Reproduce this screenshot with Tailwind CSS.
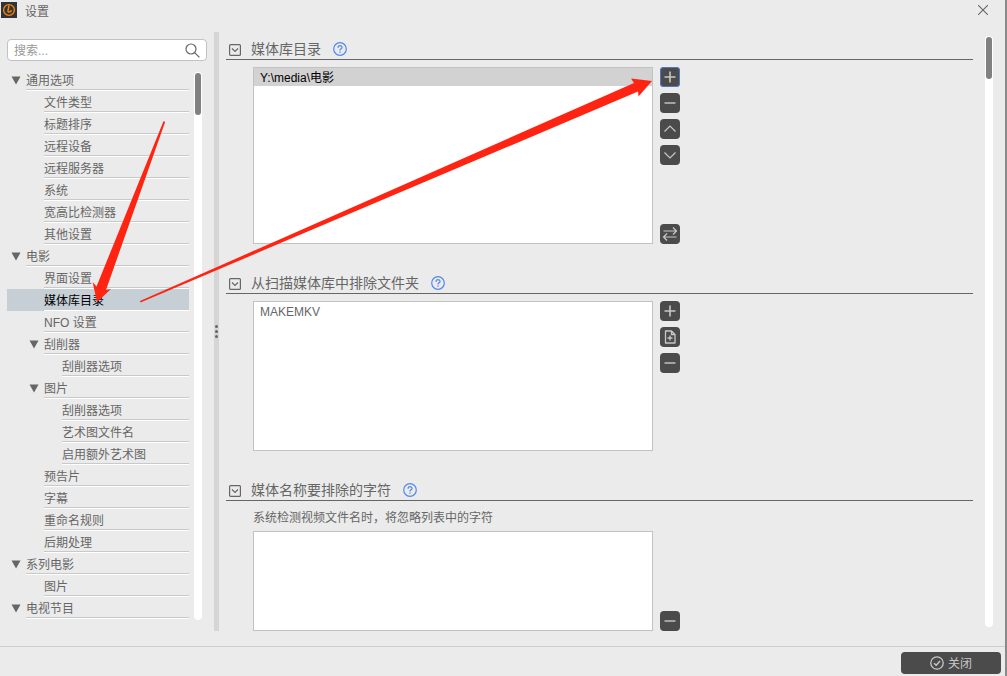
<!DOCTYPE html>
<html lang="zh-CN">
<head>
<meta charset="utf-8">
<title>设置</title>
<meta name="viewport" content="width=device-width, initial-scale=1">
<script src="https://cdn.jsdelivr.net/npm/@tailwindcss/browser@4"></script>
</head>
<body class="relative flex h-screen flex-col overflow-hidden border-r-2 border-[#8a8a8a] bg-[#ebebeb] font-['Liberation_Sans','Noto_Sans_CJK_SC',sans-serif] text-xs text-[#666666]">

<svg class="hidden" aria-hidden="true">
  <symbol id="plus" viewBox="0 0 20 20"><path d="M4.500 10h11M10 4.500v11" fill="none" stroke="#c8c8c8" stroke-width="1.600"/></symbol>
  <symbol id="minus" viewBox="0 0 20 20"><path d="M4.500 10h11" fill="none" stroke="#c0c0c0" stroke-width="1.500"/></symbol>
  <symbol id="up" viewBox="0 0 20 20"><path d="M4.500 12.500 10 7l5.500 5.500" fill="none" stroke="#c8c8c8" stroke-width="1.200"/></symbol>
  <symbol id="down" viewBox="0 0 20 20"><path d="M4.500 7.500 10 13l5.500-5.500" fill="none" stroke="#c8c8c8" stroke-width="1.200"/></symbol>
  <symbol id="swap" viewBox="0 0 20 20"><path d="M3.500 7H16M13 3.500 16.500 7 13 10.500M16.500 13H4M7 9.500 3.500 13 7 16.500" fill="none" stroke="#c8c8c8" stroke-width="1.200"/></symbol>
  <symbol id="file" viewBox="0 0 20 20"><path d="M5.500 4h6l3.500 3.500V16h-9.500zM11.500 4v3.500H15M10 8.500v5M7.500 11h5" fill="none" stroke="#c8c8c8" stroke-width="1.300" stroke-linejoin="round"/></symbol>
  <symbol id="fold" viewBox="0 0 12 12"><rect x=".6" y=".6" width="10.800" height="10.800" rx="1" fill="none" stroke="#666" stroke-width="1.200"/><path d="m3 4.500 3 3 3-3" fill="none" stroke="#666" stroke-width="1.200"/></symbol>
  <symbol id="help" viewBox="0 0 14 14"><circle cx="7" cy="7" r="6.300" fill="none" stroke="#5189ec" stroke-width="1.200"/><path d="M5.100 5.700C5.100 3 9 3.200 9 5.400 9 6.800 7 6.900 7 8.400M7 9.500v1.300" fill="none" stroke="#5189ec" stroke-width="1.300"/></symbol>
  <symbol id="tri" viewBox="0 0 10 9"><path d="M.5.500h9L5 8.500z" fill="#666"/></symbol>
</svg>

<header class="flex h-8 shrink-0 items-start justify-between pl-px pr-[17px]">
  <div class="flex items-start gap-2">
    <svg class="mt-0.5 size-4" viewBox="0 0 16 16" aria-hidden="true"><path fill="#30343a" d="M0 0h16v16H0z"/><circle cx="8" cy="8" r="5.400" fill="none" stroke="#f5820b" stroke-width="1.400"/><path d="M8 3.500 7 8.500q-.3 1.700 1.200 1.600c1.300 0 2-.8 2.300-2" fill="none" stroke="#f5820b" stroke-width="1.500"/></svg>
    <h1 class="leading-6">设置</h1>
  </div>
  <button type="button" aria-label="关闭窗口" class="mt-[5px]"><svg class="size-2.5" viewBox="0 0 10 10"><path d="m0 0 10 10M10 0 0 10" stroke="#666" stroke-width="1.100"/></svg></button>
</header>

<div class="flex min-h-0 flex-1">
  <aside class="flex w-[207px] shrink-0 flex-col pl-[7px] pt-[7px]">
    <label class="flex h-[22px] shrink-0 items-center rounded-sm border border-[#c2c2c2] bg-white pl-1.5 pr-1.5">
      <input type="text" aria-label="搜索" placeholder="搜索..." class="min-w-0 flex-1 bg-transparent pt-0.5 outline-none placeholder:text-[#999999]">
      <svg class="size-[15px]" viewBox="0 0 15 15" aria-hidden="true"><circle cx="6" cy="6" r="5" fill="none" stroke="#666" stroke-width="1.200"/><path d="m9.600 9.600 4.800 4.800" stroke="#666" stroke-width="1.300"/></svg>
    </label>
    <div class="flex min-h-0 flex-1 gap-[5px] pb-[26px] pt-2">
      <nav id="tree" aria-label="设置项" class="flex-1 overflow-hidden"></nav>
      <div class="mr-[5px] mt-[3px] w-2 rounded-full bg-white px-px pt-px"><div class="h-[42px] w-1.5 rounded-full bg-[#808080]"></div></div>
    </div>
  </aside>

  <div class="mb-[15px] ml-[7px] flex w-[5px] shrink-0 flex-col items-center justify-center gap-[2px] bg-[#d5d5d5]">
    <i class="size-[3px] rounded-full bg-[#666666]"></i><i class="size-[3px] rounded-full bg-[#666666]"></i><i class="size-[3px] rounded-full bg-[#666666]"></i>
  </div>

  <main class="ml-[7px] mr-3 flex min-w-0 flex-1 gap-3 overflow-hidden">
    <div class="flex-1 pt-2">
      <section>
        <div class="flex h-5 items-center border-b border-[#666666] pl-[3px]">
          <button type="button" aria-label="折叠" class="size-3"><svg class="size-3"><use href="#fold"/></svg></button>
          <h2 class="mb-0.5 ml-2.5 mr-3 text-sm leading-5">媒体库目录</h2>
          <button type="button" aria-label="帮助" class="mb-0.5 size-3.5"><svg class="size-3.5"><use href="#help"/></svg></button>
        </div>
        <div class="ml-[27px] mt-[7px] flex gap-[7px]">
          <ul class="h-[177px] w-[400px] border border-[#c2c2c2] bg-white"><li class="h-[18px] bg-[#d2d2d2] pl-1.5 leading-5 text-black">Y:\media\电影</li></ul>
          <div class="flex flex-col gap-1.5">
            <button type="button" aria-label="添加" class="size-5 rounded bg-[#4b4b4b] ring-1 ring-inset ring-[#4b78c8]"><svg class="size-5"><use href="#plus"/></svg></button>
            <button type="button" aria-label="移除" class="size-5 rounded bg-[#4b4b4b]"><svg class="size-5"><use href="#minus"/></svg></button>
            <button type="button" aria-label="上移" class="size-5 rounded bg-[#4b4b4b]"><svg class="size-5"><use href="#up"/></svg></button>
            <button type="button" aria-label="下移" class="size-5 rounded bg-[#4b4b4b]"><svg class="size-5"><use href="#down"/></svg></button>
            <button type="button" aria-label="交换" class="mt-auto size-5 rounded bg-[#4b4b4b]"><svg class="size-5"><use href="#swap"/></svg></button>
          </div>
        </div>
      </section>

      <section class="mt-[30px]">
        <div class="flex h-5 items-center border-b border-[#666666] pl-[3px]">
          <button type="button" aria-label="折叠" class="size-3"><svg class="size-3"><use href="#fold"/></svg></button>
          <h2 class="mb-0.5 ml-2.5 mr-3 text-sm leading-5">从扫描媒体库中排除文件夹</h2>
          <button type="button" aria-label="帮助" class="mb-0.5 size-3.5"><svg class="size-3.5"><use href="#help"/></svg></button>
        </div>
        <div class="ml-[27px] mt-[7px] flex gap-[7px]">
          <ul class="h-[150px] w-[400px] border border-[#c2c2c2] bg-white"><li class="h-[18px] pl-1.5 leading-5">MAKEMKV</li></ul>
          <div class="flex flex-col gap-1.5">
            <button type="button" aria-label="添加" class="size-5 rounded bg-[#4b4b4b]"><svg class="size-5"><use href="#plus"/></svg></button>
            <button type="button" aria-label="添加文件" class="size-5 rounded bg-[#4b4b4b]"><svg class="size-5"><use href="#file"/></svg></button>
            <button type="button" aria-label="移除" class="size-5 rounded bg-[#4b4b4b]"><svg class="size-5"><use href="#minus"/></svg></button>
          </div>
        </div>
      </section>

      <section class="mt-[30px]">
        <div class="flex h-5 items-center border-b border-[#666666] pl-[3px]">
          <button type="button" aria-label="折叠" class="size-3"><svg class="size-3"><use href="#fold"/></svg></button>
          <h2 class="mb-0.5 ml-2.5 mr-3 text-sm leading-5">媒体名称要排除的字符</h2>
          <button type="button" aria-label="帮助" class="mb-0.5 size-3.5"><svg class="size-3.5"><use href="#help"/></svg></button>
        </div>
        <p class="ml-[27px] mt-[7px] leading-5">系统检测视频文件名时，将忽略列表中的字符</p>
        <div class="ml-[27px] mt-[3px] flex items-end gap-[7px]">
          <ul class="h-[100px] w-[400px] border border-[#c2c2c2] bg-white"></ul>
          <button type="button" aria-label="移除" class="size-5 rounded bg-[#4b4b4b]"><svg class="size-5"><use href="#minus"/></svg></button>
        </div>
      </section>
    </div>
    <div class="mb-[19px] mt-1 w-2 rounded-full bg-white px-px pt-px"><div class="h-[42px] w-1.5 rounded-full bg-[#808080]"></div></div>
  </main>
</div>

<footer class="flex h-[30px] shrink-0 items-start justify-end border-t border-[#cdcdcd] pr-1 pt-[5px]">
  <button type="button" class="flex h-[22px] w-[100px] items-center justify-center gap-1 rounded bg-[#4b4b4b] text-[#c8c8c8]">
    <svg class="size-3.5" viewBox="0 0 14 14" aria-hidden="true"><circle cx="7" cy="7" r="6.200" fill="none" stroke="#c8c8c8" stroke-width="1.300"/><path d="m4 7.200 2.200 2L10 5" fill="none" stroke="#c8c8c8" stroke-width="1.400"/></svg>
    <span class="pt-0.5">关闭</span>
  </button>
</footer>

<!-- Dark sliver of the window behind, showing at the right edge -->
<div class="absolute -right-0.5 top-[11px] h-[99px] w-px bg-[#161616]"></div>

<!-- Annotation arrows -->
<svg class="pointer-events-none absolute left-0 top-0" width="700" height="320" viewBox="0 0 700 320" aria-hidden="true">
  <g fill="#ff2412">
    <path d="M163.500 121.200 165.200 121.800 106 290 111 289 97 302 92.600 282 96.500 286.500z"/>
    <path d="M140 301 634 83 631 78.500 652 81 638.500 96.500 638 91.500 140.500 302.500z"/>
  </g>
</svg>

<script>
const rows = [
  [0, "通用选项", 1], [1, "文件类型"], [1, "标题排序"], [1, "远程设备"], [1, "远程服务器"], [1, "系统"],
  [1, "宽高比检测器"], [1, "其他设置"], [0, "电影", 1], [1, "界面设置"], [1, "媒体库目录"], [1, "NFO 设置"],
  [1, "刮削器", 1], [2, "刮削器选项"], [1, "图片", 1], [2, "刮削器选项"], [2, "艺术图文件名"], [2, "启用额外艺术图"],
  [1, "预告片"], [1, "字幕"], [1, "重命名规则"], [1, "后期处理"], [0, "系列电影", 1], [1, "图片"], [0, "电视节目", 1]
];
const indent = ["w-[19px]", "w-[37px]", "w-[55px]"];
document.getElementById("tree").innerHTML = rows.map(([level, label, open]) => {
  const active = label === "媒体库目录";
  return `<a href="#" ${active ? 'aria-current="page"' : ""} class="flex h-[22px] ${active ? "bg-[#c6ced6] text-black" : ""}">
    <span class="${indent[level]} flex shrink-0 items-center justify-end pr-[5px]">${open ? '<svg class="h-[9px] w-2.5"><use href="#tri"/></svg>' : ""}</span>
    <span class="flex-1 border-b border-white"><span class="block h-[21px] border-b ${active ? "border-transparent" : "border-[#c9c9c9]"} leading-[25px]">${label}</span></span>
  </a>`;
}).join("");
</script>
</body>
</html>
